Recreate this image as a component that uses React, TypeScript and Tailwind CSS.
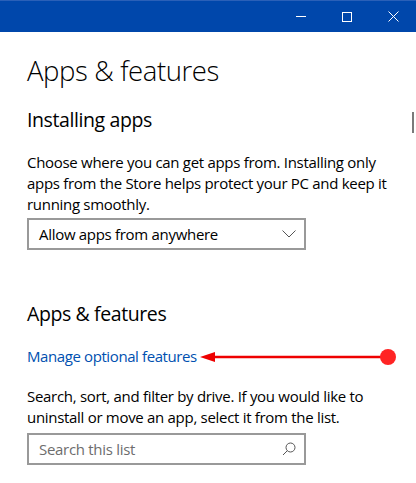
import React from "react";

const font = { fontFamily: '"Open Sans", "Noto Sans", sans-serif' };

function TitleBar() {
  return (
    <div className="relative h-8 bg-[#0047ab] border-t border-[#2a60b8]">
      <div className="absolute right-0 top-0 flex h-full">
        <div className="flex h-full w-[46px] items-center justify-center">
          <div className="h-px w-[10px] bg-white" />
        </div>
        <div className="flex h-full w-[46px] items-center justify-center">
          <div className="h-[10px] w-[10px] border border-white" />
        </div>
        <div className="flex h-full w-[46px] items-center justify-center">
          <svg width="11" height="11" viewBox="0 0 11 11">
            <path d="M0.5 0.5 L10.5 10.5 M10.5 0.5 L0.5 10.5" stroke="white" strokeWidth="1" />
          </svg>
        </div>
      </div>
    </div>
  );
}

export default function App() {
  return (
    <div className="relative h-[483px] w-[416px] overflow-hidden bg-white text-black" style={font}>
      <TitleBar />
      <div className="pl-[27px]">
        <h1 className="mt-[20px] h-[38px] text-[27.5px] font-light leading-[38px] tracking-[-0.4px]">
          Apps &amp; features
        </h1>
        <h2 className="mt-[16px] h-[28px] text-[19.5px] leading-[28px] tracking-[-0.4px]">
          Installing apps
        </h2>
        <p className="mt-[18px] w-[375px] text-[15px] leading-[21px] tracking-[-0.3px]">
          Choose where you can get apps from. Installing only apps from the Store helps protect your PC and keep it running smoothly.
        </p>
        <div className="mt-[3px] flex h-8 w-[279px] items-center justify-between border-2 border-[#999999] pl-[10px] pr-[8px]">
          <span className="text-[15px] tracking-[-0.3px]">Allow apps from anywhere</span>
          <svg width="14" height="8" viewBox="0 0 14 8">
            <path d="M0.5 0.5 L7 7 L13.5 0.5" fill="none" stroke="#555" strokeWidth="1" />
          </svg>
        </div>
        <h2 className="mt-[50px] h-[28px] text-[19.5px] leading-[28px] tracking-[-0.4px]">
          Apps &amp; features
        </h2>
        <a className="mt-[18px] block h-[21px] text-[15px] leading-[21px] tracking-[-0.4px] text-[#0050b0]">
          Manage optional features
        </a>
        <p className="mt-[19px] w-[375px] text-[15px] leading-[20.5px] tracking-[-0.3px]">
          Search, sort, and filter by drive. If you would like to uninstall or move an app, select it from the list.
        </p>
        <div className="mt-[6px] flex h-8 w-[279px] items-center justify-between border-2 border-[#999999] pl-[10px] pr-[8px]">
          <span className="text-[15px] tracking-[-0.3px] text-[#6d6d6d]">Search this list</span>
          <svg width="14" height="14" viewBox="0 0 14 14">
            <circle cx="8.5" cy="5.5" r="4.5" fill="none" stroke="#555" strokeWidth="1" />
            <path d="M5.3 8.7 L1 13" stroke="#555" strokeWidth="1" />
          </svg>
        </div>
      </div>
      <div className="absolute left-[412px] top-[112px] h-[21px] w-[2px] bg-[#7a7a7a]" />
      <svg className="absolute left-0 top-0" width="416" height="483">
        <line x1="212" y1="357" x2="387" y2="357" stroke="#ee0000" strokeWidth="2.5" />
        <polygon points="200,357 215,352 215,362" fill="#ee0000" />
        <circle cx="388" cy="357" r="8" fill="#ff2424" />
      </svg>
    </div>
  );
}
